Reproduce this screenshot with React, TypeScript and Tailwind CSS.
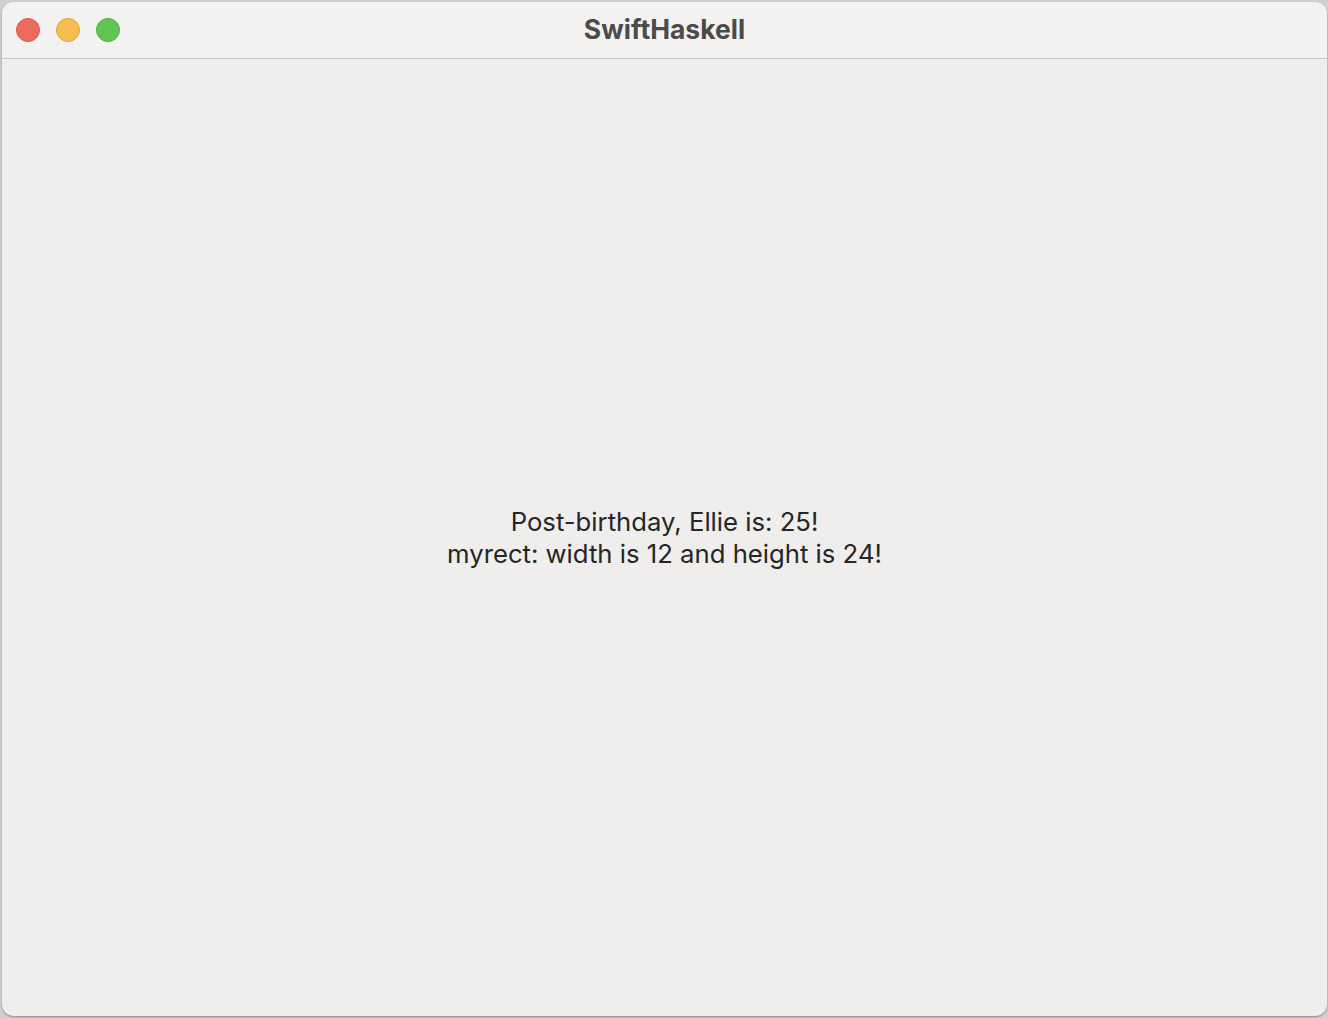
export default function App() {
  return (
    <div className="h-[1018px] w-[1328px] overflow-hidden bg-[#cfcfd3] p-[2px] pr-[1px] pb-[2px]">
      {/* Window */}
      <div className="flex h-full w-full flex-col overflow-hidden rounded-[12px] bg-[#efeeec] shadow-[0_1px_2px_rgba(0,0,0,0.35)]">
        {/* Title bar */}
        <div className="relative flex h-[57px] shrink-0 items-center justify-center border-b border-[#c9c8c6] bg-[#f3f2f0]">
          <div className="absolute left-[14px] top-[16px] flex gap-[16px]">
            <span className="h-[24px] w-[24px] rounded-full border border-[#d9574b] bg-[#ed6a5e]" />
            <span className="h-[24px] w-[24px] rounded-full border border-[#dea73a] bg-[#f5bf4f]" />
            <span className="h-[24px] w-[24px] rounded-full border border-[#4fab3f] bg-[#61c554]" />
          </div>
          <span className="font-['Inter',sans-serif] text-[26.5px] font-bold text-[#4b4b4b]">SwiftHaskell</span>
        </div>
        {/* Content */}
        <div className="flex flex-1 flex-col items-center justify-center font-['Inter',sans-serif] text-[25.7px] leading-[32px] text-[#262626]">
          <p>Post-birthday, Ellie is: 25!</p>
          <p>myrect: width is 12 and height is 24!</p>
        </div>
      </div>
    </div>
  );
}
